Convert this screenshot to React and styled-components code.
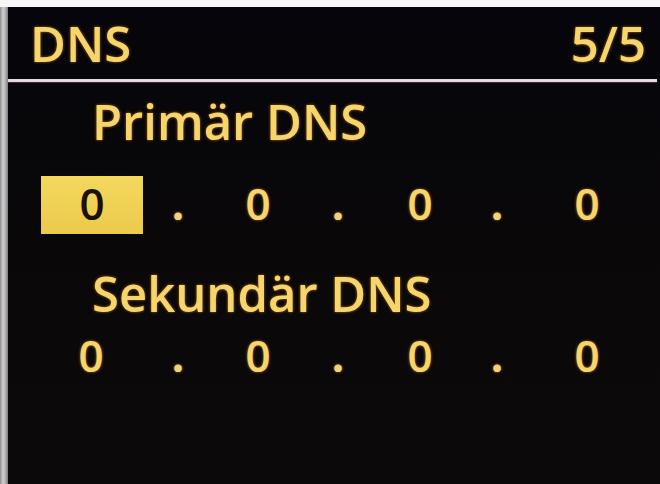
import styled, { createGlobalStyle } from "styled-components";

const GlobalStyle = createGlobalStyle`
  html, body {
    margin: 0;
    padding: 0;
    background: #f5f5f5;
  }
  #root {
    width: 660px;
    height: 484px;
    overflow: hidden;
  }
`;

const Frame = styled.div`
  width: 660px;
  height: 484px;
  padding-top: 7px;
  box-sizing: border-box;
  background: #f6f6f6;
`;

const Bezel = styled.div`
  height: 100%;
  padding-left: 8px;
  box-sizing: border-box;
  background: linear-gradient(90deg, #8c8c8c 0, #cfcfcf 3px, #b9b9b9 5px, #7a7a7a 8px);
`;

const Screen = styled.div`
  height: 100%;
  display: flex;
  flex-direction: column;
  background: linear-gradient(180deg, #05050b 0, #07060a 80px, #0a0808 300px, #0b0909 100%);
  font-family: "Open Sans", "DejaVu Sans", sans-serif;
  color: #f4d66c;
  text-shadow: 0 0 3px rgba(235, 130, 20, 0.75);
`;

const Header = styled.div`
  height: 72px;
  box-sizing: border-box;
  display: flex;
  justify-content: space-between;
  padding: 12px 14px 0 22px;
  font-size: 49px;
  line-height: 49px;
  font-weight: 600;
`;

const Divider = styled.div`
  height: 3px;
  margin-right: 3px;
  background: #e2dbe8;
  box-shadow: 0 1px 1px rgba(140, 60, 60, 0.6);
`;

const Label = styled.div`
  margin-top: ${(p) => p.$gap}px;
  padding-left: 84px;
  font-size: 49px;
  line-height: 50px;
  font-weight: 600;
`;

// columns: octet / dot / octet / dot / octet / dot / octet
const AddressRow = styled.div`
  margin-top: ${(p) => p.$gap}px;
  padding-left: 41px;
  height: 58px;
  display: grid;
  grid-template-columns: 84px 90px 70px 90px 74px 80px 100px;
  align-items: center;
`;

const Cell = styled.div`
  display: flex;
  justify-content: center;
  align-items: center;
  height: 58px;
  box-sizing: border-box;
  padding-bottom: 5px;
  font-size: 44px;
  font-weight: 600;
  line-height: 1;
`;

const Octet = styled(Cell)`
  ${(p) =>
    p.$active &&
    `
    margin: 0 -10px 0 -8px;
    background: linear-gradient(180deg, #f3d85e, #ecca4a);
    color: #1b1005;
    text-shadow: none;
  `}
`;

const Dot = styled(Cell)`
  font-weight: 700;
  color: #eed37e;
`;

function Address({ octets, active, gap }) {
  const cells = [];
  octets.forEach((o, i) => {
    if (i > 0) cells.push(<Dot key={"d" + i}>.</Dot>);
    cells.push(
      <Octet key={"o" + i} $active={i === active}>
        {o}
      </Octet>
    );
  });
  return <AddressRow $gap={gap}>{cells}</AddressRow>;
}

export default function App() {
  return (
    <>
      <GlobalStyle />
      <Frame>
        <Bezel>
          <Screen>
            <Header>
              <span>DNS</span>
              <span>5/5</span>
            </Header>
            <Divider />
            <Label $gap={14}>Primär DNS</Label>
            <Address octets={[0, 0, 0, 0]} active={0} gap={30} />
            <Label $gap={34}>Sekundär DNS</Label>
            <Address octets={[0, 0, 0, 0]} active={-1} gap={10} />
          </Screen>
        </Bezel>
      </Frame>
    </>
  );
}
